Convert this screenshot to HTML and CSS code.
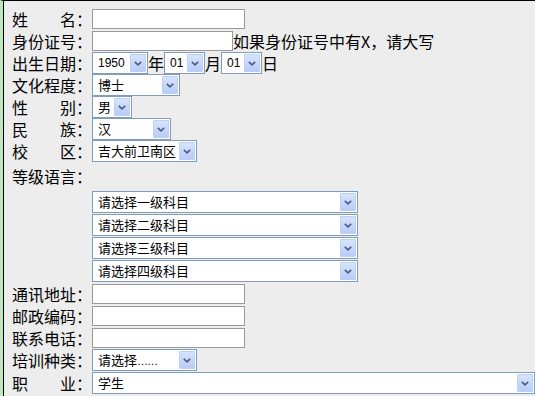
FILE: index.html
```html
<!DOCTYPE html>
<html lang="zh-CN">
<head>
<meta charset="utf-8">
<title>报名表</title>
<link rel="stylesheet" href="styles.css">
</head>
<body>
<div class="page">
  <div class="frame">
    <div class="form">
      <div class="row">
        <span class="label">姓　　名：</span>
        <input type="text" class="inp w153">
      </div>
      <div class="row">
        <span class="label">身份证号：</span>
        <input type="text" class="inp w141"><span class="note">如果身份证号中有X，请大写</span>
      </div>
      <div class="row">
        <span class="label">出生日期：</span>
        <div class="sel w56 num"><span class="val">1950</span><span class="btn"><svg width="8" height="5" viewBox="0 0 8 5"><path d="M0.8 0.8 L4 3.8 L7.2 0.8" /></svg></span></div><span class="unit">年</span><div class="sel w41 num"><span class="val">01</span><span class="btn"><svg width="8" height="5" viewBox="0 0 8 5"><path d="M0.8 0.8 L4 3.8 L7.2 0.8" /></svg></span></div><span class="unit">月</span><div class="sel w41 num"><span class="val">01</span><span class="btn"><svg width="8" height="5" viewBox="0 0 8 5"><path d="M0.8 0.8 L4 3.8 L7.2 0.8" /></svg></span></div><span class="unit">日</span>
      </div>
      <div class="row">
        <span class="label">文化程度：</span>
        <div class="sel w88"><span class="val">博士</span><span class="btn"><svg width="8" height="5" viewBox="0 0 8 5"><path d="M0.8 0.8 L4 3.8 L7.2 0.8" /></svg></span></div>
      </div>
      <div class="row">
        <span class="label">性　　别：</span>
        <div class="sel w40"><span class="val">男</span><span class="btn"><svg width="8" height="5" viewBox="0 0 8 5"><path d="M0.8 0.8 L4 3.8 L7.2 0.8" /></svg></span></div>
      </div>
      <div class="row">
        <span class="label">民　　族：</span>
        <div class="sel w79"><span class="val">汉</span><span class="btn"><svg width="8" height="5" viewBox="0 0 8 5"><path d="M0.8 0.8 L4 3.8 L7.2 0.8" /></svg></span></div>
      </div>
      <div class="row">
        <span class="label">校　　区：</span>
        <div class="sel w105"><span class="val">吉大前卫南区</span><span class="btn"><svg width="8" height="5" viewBox="0 0 8 5"><path d="M0.8 0.8 L4 3.8 L7.2 0.8" /></svg></span></div>
      </div>
      <div class="row tall">
        <span class="label">等级语言：</span>
      </div>
      <div class="levels">
        <div class="sel w266"><span class="val">请选择一级科目</span><span class="btn"><svg width="8" height="5" viewBox="0 0 8 5"><path d="M0.8 0.8 L4 3.8 L7.2 0.8" /></svg></span></div>
        <div class="sel w266"><span class="val">请选择二级科目</span><span class="btn"><svg width="8" height="5" viewBox="0 0 8 5"><path d="M0.8 0.8 L4 3.8 L7.2 0.8" /></svg></span></div>
        <div class="sel w266"><span class="val">请选择三级科目</span><span class="btn"><svg width="8" height="5" viewBox="0 0 8 5"><path d="M0.8 0.8 L4 3.8 L7.2 0.8" /></svg></span></div>
        <div class="sel w266"><span class="val">请选择四级科目</span><span class="btn"><svg width="8" height="5" viewBox="0 0 8 5"><path d="M0.8 0.8 L4 3.8 L7.2 0.8" /></svg></span></div>
      </div>
      <div class="row">
        <span class="label">通讯地址：</span>
        <input type="text" class="inp w153">
      </div>
      <div class="row">
        <span class="label">邮政编码：</span>
        <input type="text" class="inp w153">
      </div>
      <div class="row">
        <span class="label">联系电话：</span>
        <input type="text" class="inp w153">
      </div>
      <div class="row">
        <span class="label">培训种类：</span>
        <div class="sel w105"><span class="val">请选择<span class="dots">……</span></span><span class="btn"><svg width="8" height="5" viewBox="0 0 8 5"><path d="M0.8 0.8 L4 3.8 L7.2 0.8" /></svg></span></div>
      </div>
      <div class="row last">
        <span class="label">职　　业：</span>
        <div class="sel w443"><span class="val">学生</span><span class="btn"><svg width="8" height="5" viewBox="0 0 8 5"><path d="M0.8 0.8 L4 3.8 L7.2 0.8" /></svg></span></div>
      </div>
    </div>
  </div>
</div>
</body>
</html>
```

FILE: styles.css
```css
html, body {
  margin: 0;
  padding: 0;
  height: 100%;
}

body {
  background: #ededed;
  font-family: "Noto Sans CJK SC", "Liberation Sans", sans-serif;
  color: #000;
  overflow: hidden;
}

.page {
  box-sizing: border-box;
  height: 100%;
  border-top: 1px solid #000;
  border-left: 3px solid #bfe6bf;
}

.frame {
  box-sizing: border-box;
  height: 100%;
  border-left: 1px solid #000;
  padding: 7px 0 0 8px;
}

.form {
  display: flex;
  flex-direction: column;
}

.row {
  display: flex;
  align-items: center;
  height: 22px;
  font-size: 16px;
  line-height: 22px;
  white-space: nowrap;
}

.row.tall {
  height: 28px;
}

.row.last {
  margin-top: 1px;
}

.label {
  width: 80px;
  flex: none;
  font-size: 16px;
}

.note,
.unit {
  font-size: 16px;
}

.unit {
  width: 16px;
  flex: none;
}

.inp {
  box-sizing: border-box;
  height: 20px;
  margin: 0;
  padding: 0 3px;
  border: 1px solid #9a9a9a;
  background: #fff;
  font-size: 13px;
  outline: none;
}

.sel {
  box-sizing: border-box;
  display: flex;
  align-items: center;
  height: 22px;
  flex: none;
  border: 1px solid #7f9db9;
  background: #fff;
}

.sel .val {
  flex: 1;
  min-width: 0;
  padding-left: 5px;
  font-size: 13px;
  line-height: 20px;
  white-space: nowrap;
  overflow: hidden;
}

.sel .val .dots {
  font-family: "Liberation Sans", sans-serif;
  font-size: 11px;
  letter-spacing: -1px;
}

.sel.num .val {
  font-family: "Liberation Sans", sans-serif;
  font-size: 12px;
}

.sel .btn {
  box-sizing: border-box;
  flex: none;
  width: 16px;
  height: 18px;
  margin-right: 1px;
  border: 1px solid #bccff7;
  border-radius: 1px;
  background: linear-gradient(#d8e4fd, #b9cbf8);
  display: flex;
  align-items: center;
  justify-content: center;
}

.sel .btn svg path {
  fill: none;
  stroke: #4a5d85;
  stroke-width: 1.7;
}

.levels {
  display: flex;
  flex-direction: column;
  gap: 1px;
  padding: 1px 0 1px 80px;
}

.w40 { width: 40px; }
.w41 { width: 41px; }
.w56 { width: 56px; }
.w79 { width: 79px; }
.w88 { width: 88px; }
.w105 { width: 105px; }
.w141 { width: 141px; }
.w153 { width: 153px; }
.w266 { width: 266px; }
.w443 { width: 443px; }
```
